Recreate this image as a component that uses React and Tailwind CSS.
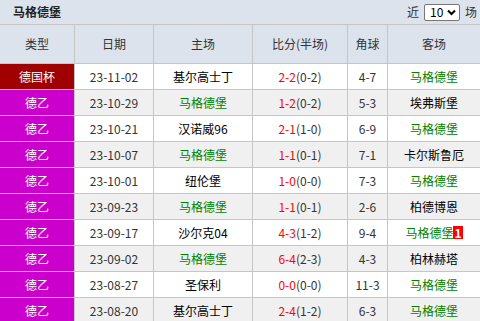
const rows = [
  { type: "德国杯", date: "23-11-02", home: "基尔高士丁", ft: "2-2", ht: "(0-2)", corner: "4-7", away: "马格德堡" },
  { type: "德乙", date: "23-10-29", home: "马格德堡", ft: "1-2", ht: "(0-2)", corner: "5-3", away: "埃弗斯堡" },
  { type: "德乙", date: "23-10-21", home: "汉诺威96", ft: "2-1", ht: "(1-0)", corner: "6-9", away: "马格德堡" },
  { type: "德乙", date: "23-10-07", home: "马格德堡", ft: "1-1", ht: "(0-1)", corner: "7-1", away: "卡尔斯鲁厄" },
  { type: "德乙", date: "23-10-01", home: "纽伦堡", ft: "1-0", ht: "(0-0)", corner: "7-3", away: "马格德堡" },
  { type: "德乙", date: "23-09-23", home: "马格德堡", ft: "1-1", ht: "(0-1)", corner: "2-6", away: "柏德博恩" },
  { type: "德乙", date: "23-09-17", home: "沙尔克04", ft: "4-3", ht: "(1-2)", corner: "9-4", away: "马格德堡", badge: "1" },
  { type: "德乙", date: "23-09-02", home: "马格德堡", ft: "6-4", ht: "(2-3)", corner: "4-3", away: "柏林赫塔" },
  { type: "德乙", date: "23-08-27", home: "圣保利", ft: "0-0", ht: "(0-0)", corner: "11-3", away: "马格德堡" },
  { type: "德乙", date: "23-08-20", home: "基尔高士丁", ft: "2-4", ht: "(1-2)", corner: "6-3", away: "马格德堡" },
];

const TEAM = "马格德堡";
const cols = "grid grid-cols-[75px_79px_99px_95px_40px_92px]";
const cell = "flex items-center justify-center border-r border-[#c6c6c6]";

const App = () => {
  return (
    <div
      className="w-[480px] h-[321px] overflow-hidden bg-white text-[12px] text-[#333]"
      style={{ fontFamily: '"Microsoft YaHei", "Noto Sans CJK SC", sans-serif' }}
    >
      <div className="h-[25px] bg-[#dce3ed] border-b border-[#c6c6c6] flex items-center justify-between pl-[13px] pr-[3px]">
        <span className="font-bold text-[#222]">马格德堡</span>
        <div className="flex items-center gap-[5px]">
          <span>近</span>
          <div className="w-[36px] h-[17px] bg-white border border-[#767676] rounded-[2px] flex items-center justify-between pl-[5px] pr-[3px] text-[12px] text-black">
            <span>10</span>
            <svg width="9" height="7" viewBox="0 0 9 7">
              <path d="M1 1.5 L4.5 5 L8 1.5" stroke="#000" strokeWidth="2" fill="none" />
            </svg>
          </div>
          <span>场</span>
        </div>
      </div>

      <div className={`${cols} h-[39px] bg-[#dce3ed] border-b border-[#c6c6c6]`}>
        {["类型", "日期", "主场", "比分(半场)", "角球", "客场"].map((h, i) => (
          <div key={i} className={`${cell} ${i === 5 ? "border-r-0" : ""}`}>
            {h}
          </div>
        ))}
      </div>

      {rows.map((r, i) => (
        <div
          key={i}
          className={`${cols} h-[26px] border-b border-[#c6c6c6] ${i % 2 === 1 ? "bg-[#f0f0f0]" : "bg-white"}`}
        >
          <div className={`${cell} text-white ${r.type === "德国杯" ? "bg-[#a00000]" : "bg-[#cc00cc]"}`}>
            {r.type}
          </div>
          <div className={cell}>{r.date}</div>
          <div className={`${cell} ${r.home === TEAM ? "text-[#008000]" : "text-black"}`}>{r.home}</div>
          <div className={cell}>
            <span className="text-[#ff0000]">{r.ft}</span>
            <span>{r.ht}</span>
          </div>
          <div className={cell}>{r.corner}</div>
          <div className={`${cell} border-r-0 ${r.away === TEAM ? "text-[#008000]" : "text-black"}`}>
            {r.away}
            {r.badge && (
              <span className="bg-[#ff0000] text-white font-bold leading-[13px] px-[1px]">{r.badge}</span>
            )}
          </div>
        </div>
      ))}
    </div>
  );
};

export default App;
